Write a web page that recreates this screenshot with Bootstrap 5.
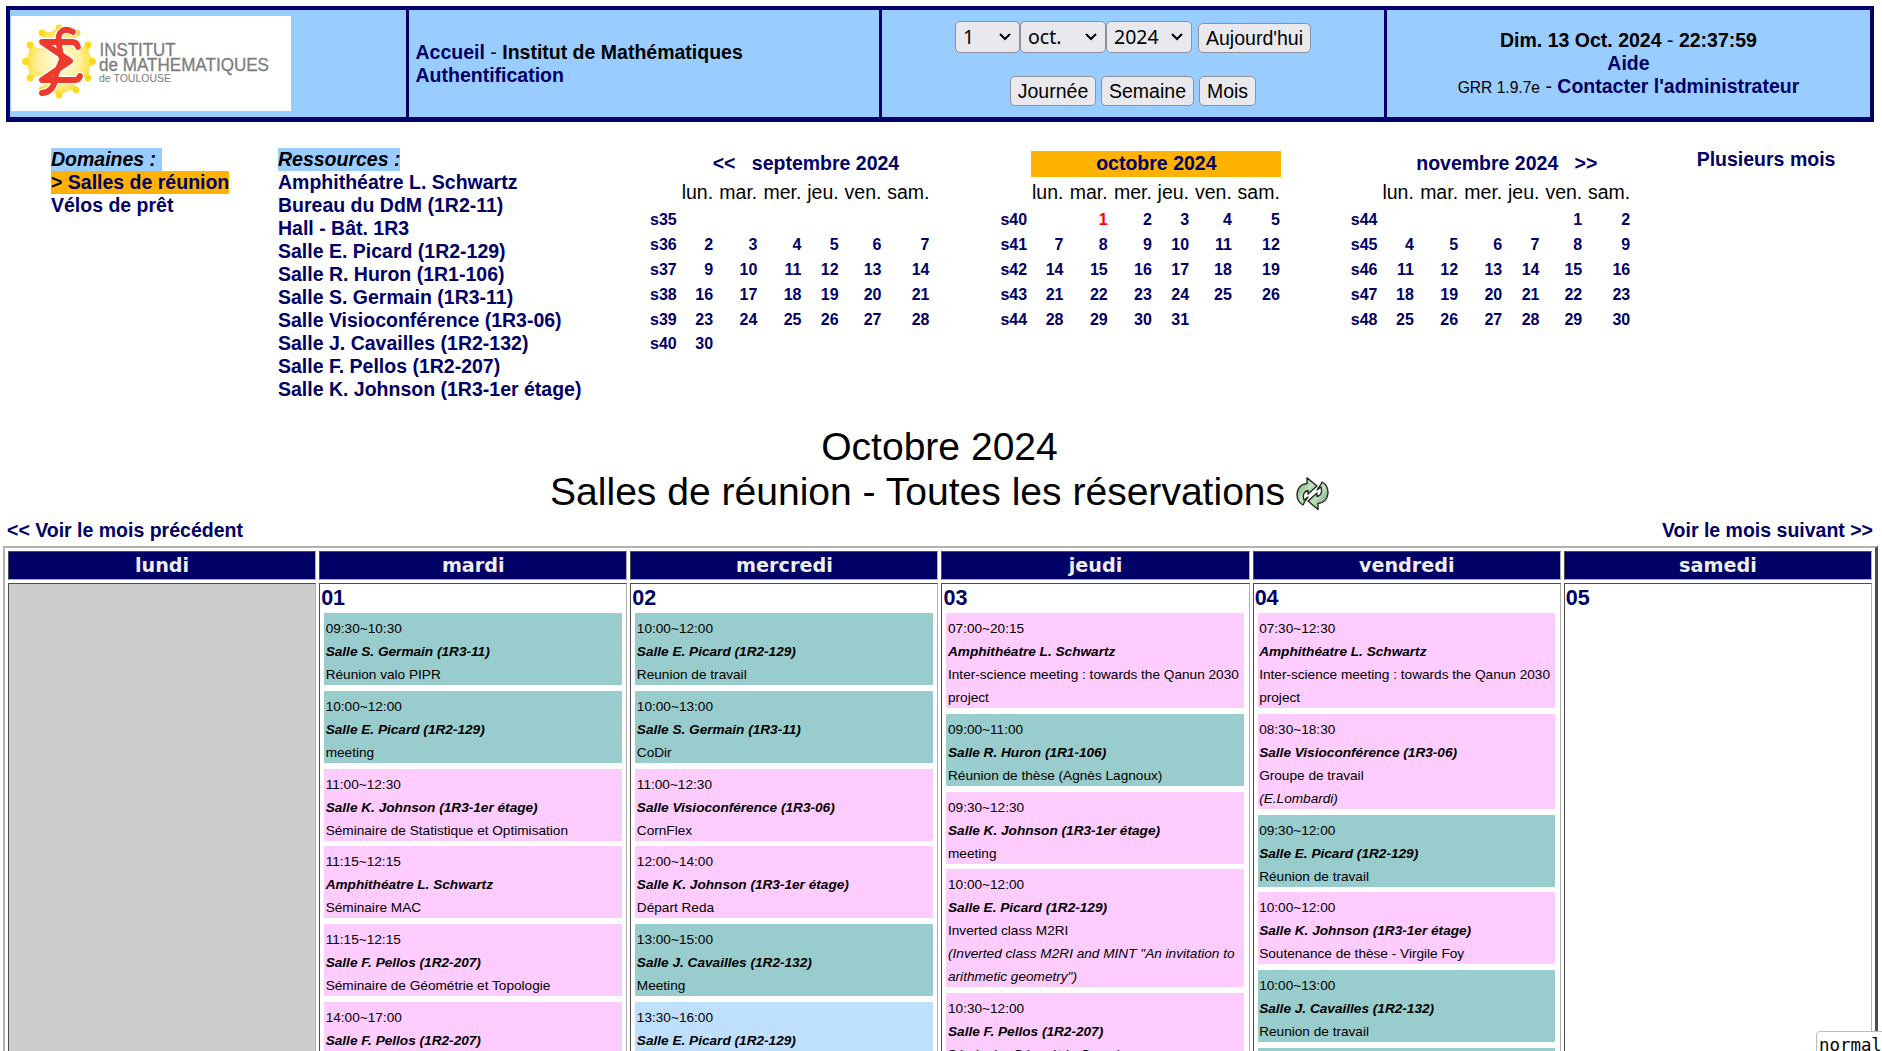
<!DOCTYPE html>
<html lang="fr">
<head>
<meta charset="utf-8">
<title>GRR - Institut de Mathématiques</title>
<link href="https://cdn.jsdelivr.net/npm/bootstrap@5.3.0/dist/css/bootstrap.min.css" rel="stylesheet">
<style>
html,body{height:1051px;overflow:hidden}
body{font-family:"Liberation Sans",Arial,sans-serif;font-size:19.5px;line-height:23px;color:#000;background:#fff;padding:6px 6px 0 3px}
a,.minical.minical a{color:#006;font-weight:700;text-decoration:none}
.banner{margin:0 2px 0 3px;height:116px;background:#9cf;border:4px solid #006;border-bottom-width:5px}
.banner>div+div{border-left:3px solid #006}
.bn-logo{width:396px;padding:6px 0 0 1px}
.bn-site{width:473px;padding-left:6.5px}
.bn-date{width:505px;padding-top:11px}
.logo{display:block;background:#fff}
.ctl{height:32px;padding:0 7px;border:1px solid #8f8f9d;border-radius:5px;background-color:#e9e9ed;color:#000;font:19.5px/28px "Noto Sans",sans-serif}
select.ctl{appearance:none;background-image:url("data:image/svg+xml,%3Csvg xmlns='http://www.w3.org/2000/svg' viewBox='0 0 12 8'%3E%3Cpath d='M1 1l5 5 5-5' fill='none' stroke='%23000' stroke-width='2'/%3E%3C/svg%3E");background-repeat:no-repeat;background-position:right 8px center;background-size:12px 8px}
button.ctl{height:30px;padding:0;font-family:"Liberation Sans",sans-serif;line-height:27px}
.row2{margin-top:23px;gap:5px}
.w64{width:65px}.w86{width:86px}.w113{width:113px;margin-left:2px}.w93{width:93px}.w57{width:57px}
.grr{font-size:15.6px}
.top-area{height:283px;padding-top:25.5px;padding-left:48px}
.dom{width:227px}.res{width:372px}
.hl{background:#9cf}.hl-on{background:#ffb200}
.minical{width:281px;margin-right:69.4px;margin-top:3.5px;display:grid;grid-template-columns:31px 33.6px 44.2px 44.2px 37.2px 42.8px 48px;text-align:right;grid-template-rows:26px 30px repeat(4,25px) 24.5px 24.5px;align-items:center}
.minical .ttl{grid-column:2/-1;text-align:center;height:26px;line-height:24px}
.minical span,.minical a{padding-right:1.5px;white-space:nowrap}
.minical>a{font-size:16px}
.minical .wk{text-align:left}
.minical .ttl a{padding:0}
.minical.minical a.today{color:red}
.plus{margin-left:-4.5px}
.titre{font-size:39.05px;line-height:45px;margin:19px 0 0;font-weight:400;padding-left:0}
.nav-mois{height:30px;padding:3px 3px 0 4px;margin-top:2px}
.planning{border:2px solid;border-color:#b0b0b0 #4d4d4d #4d4d4d #b0b0b0;border-width:2px 3px 2px 2px;padding:3px;display:grid;grid-template-columns:repeat(6,1fr);gap:3px;grid-template-rows:29px 900px;height:940px;margin-right:-2px}
.planning>div{border:1px solid;border-color:#4d4d4d #b0b0b0 #b0b0b0 #4d4d4d;min-width:0}
.jour{background:#006;color:#eee;font:bold 19.2px/28px "DejaVu Sans",sans-serif;text-align:center}
.vide{background:#ccc}
.num{display:block;font-size:21.5px;line-height:28px;height:29px;padding-left:1px}
.resa{display:flow-root;margin:0 4.5px 5.8px 4px;padding:4px 1px 0 1.5px;font-size:13.63px;line-height:23px}
.resa>*{display:block}
.resa>:last-child{margin-bottom:-1px}
.resa b{font-style:italic}
.ta{background:#9cc}.tb{background:#fcf}.tc{background:#bfdfff}
.mode{right:-3px;top:1031px;width:69px;height:26px;border:1px solid #bbb;border-radius:4px 0 0 0;background:#fff;font:17.4px/26px "DejaVu Sans Mono",monospace;padding-left:2px}
</style>
<script src="https://cdn.jsdelivr.net/npm/bootstrap@5.3.0/dist/js/bootstrap.bundle.min.js"></script>
</head>
<body class="position-relative">
<header class="banner d-flex">
  <div class="bn-logo">
    <svg class="logo" width="280" height="95" viewBox="11 16 280 95">
      <defs><radialGradient id="g"><stop offset="0" stop-color="#fffbe6"/><stop offset=".6" stop-color="#fff0a0"/><stop offset="1" stop-color="#ffdf2a"/></radialGradient></defs>
      <path d="M42 31Q50 36 59 27Q68 36 77 31Q75 42 70 48Q80 52 89 43Q86 54 94 61Q86 69 89 80Q80 72 70 76Q74 82 77 91Q68 87 59 96Q50 87 42 91Q46 82 48 76Q38 72 29 80Q32 69 24 61Q32 54 29 43Q38 52 48 48Q44 42 42 31Z" fill="url(#g)" stroke="#ffe25a"/>
      <g fill="#ffd91f"><circle cx="42" cy="33" r="3.400"/><circle cx="59" cy="28" r="3.400"/><circle cx="77" cy="33" r="3.400"/><circle cx="30" cy="45" r="3.400"/><circle cx="88" cy="45" r="3.400"/><circle cx="25.500" cy="61.500" r="3.400"/><circle cx="92.500" cy="61.500" r="3.400"/><circle cx="30" cy="78" r="3.400"/><circle cx="88" cy="78" r="3.400"/><circle cx="42" cy="90" r="3.400"/><circle cx="59" cy="95" r="3.400"/><circle cx="76" cy="90" r="3.400"/></g>
      <g fill="none" stroke-linecap="round" stroke-linejoin="round"><g stroke="#fff" stroke-width="8.500"><path d="M78 47Q77 42 72 42H42L70 61L42 80H75Q79 80 80 76"/><path d="M73 32Q65 27 60 33Q57 38 60 50L62 60L56 74Q55 92 42 93"/></g>
      <g stroke="#ee3a2c" stroke-width="5.800"><path d="M78 47Q77 42 72 42H42L70 61L42 80H75Q79 80 80 76"/><path d="M73 32Q65 27 60 33Q57 38 60 50L62 60L56 74Q55 92 42 93"/></g></g>
      <g fill="#7d7d7d" stroke="#7d7d7d" stroke-width=".3" font-family="Liberation Sans, sans-serif"><text x="99.500" y="55.500" font-size="18" textLength="76" lengthAdjust="spacingAndGlyphs">INSTITUT</text><text x="99" y="70.500" font-size="17.500" textLength="170" lengthAdjust="spacingAndGlyphs">de MATHEMATIQUES</text><text x="99" y="81.500" font-size="11" stroke="none" textLength="72" lengthAdjust="spacingAndGlyphs">de TOULOUSE</text></g>
    </svg>
  </div>
  <div class="bn-site d-flex flex-column justify-content-center"><div><a href="#">Accueil</a> - <b>Institut de Mathématiques</b></div><a href="#">Authentification</a></div>
  <div class="bn-date">
    <div class="d-flex justify-content-center align-items-end">
      <select class="ctl w64"><option>1</option></select><select class="ctl w86"><option>oct.</option></select><select class="ctl w86 me-1"><option>2024</option></select>
      <button class="ctl w113">Aujourd'hui</button>
    </div>
    <div class="row2 d-flex justify-content-center">
      <button class="ctl w86">Journée</button><button class="ctl w93">Semaine</button><button class="ctl w57">Mois</button>
    </div>
  </div>
  <div class="flex-fill text-center d-flex flex-column justify-content-center">
    <div><b>Dim. 13 Oct. 2024</b> - <b>22:37:59</b></div>
    <a href="#">Aide</a>
    <div><span class="grr">GRR 1.9.7e</span> - <a href="#">Contacter l'administrateur</a></div>
  </div>
</header>
<section class="top-area d-flex align-items-start">
  <div class="dom d-flex flex-column align-items-start"><b class="hl"><i>Domaines :&nbsp;</i></b><b class="hl-on">&gt; <a href="#">Salles de réunion</a></b><a href="#">Vélos de prêt</a></div>
  <div class="res d-flex flex-column align-items-start"><b class="hl"><i>Ressources :</i></b><a href="#">Amphithéatre L. Schwartz</a><a href="#">Bureau du DdM (1R2-11)</a><a href="#">Hall - Bât. 1R3</a><a href="#">Salle E. Picard (1R2-129)</a><a href="#">Salle R. Huron (1R1-106)</a><a href="#">Salle S. Germain (1R3-11)</a><a href="#">Salle Visioconférence (1R3-06)</a><a href="#">Salle J. Cavailles (1R2-132)</a><a href="#">Salle F. Pellos (1R2-207)</a><a href="#">Salle K. Johnson (1R3-1er étage)</a></div>
  <div class="minical">
    <i></i><div class="ttl"><a href="#">&lt;&lt;</a>&nbsp;&nbsp; <a href="#">septembre 2024</a></div>
    <i></i><span>lun.</span><span>mar.</span><span>mer.</span><span>jeu.</span><span>ven.</span><span>sam.</span>
    <a class="wk">s35</a><i></i><i></i><i></i><i></i><i></i><i></i>
    <a class="wk">s36</a><a>2</a><a>3</a><a>4</a><a>5</a><a>6</a><a>7</a>
    <a class="wk">s37</a><a>9</a><a>10</a><a>11</a><a>12</a><a>13</a><a>14</a>
    <a class="wk">s38</a><a>16</a><a>17</a><a>18</a><a>19</a><a>20</a><a>21</a>
    <a class="wk">s39</a><a>23</a><a>24</a><a>25</a><a>26</a><a>27</a><a>28</a>
    <a class="wk">s40</a><a>30</a>
  </div>
  <div class="minical">
    <i></i><div class="ttl hl-on"><a href="#">octobre 2024</a></div>
    <i></i><span>lun.</span><span>mar.</span><span>mer.</span><span>jeu.</span><span>ven.</span><span>sam.</span>
    <a class="wk">s40</a><i></i><a class="today">1</a><a>2</a><a>3</a><a>4</a><a>5</a>
    <a class="wk">s41</a><a>7</a><a>8</a><a>9</a><a>10</a><a>11</a><a>12</a>
    <a class="wk">s42</a><a>14</a><a>15</a><a>16</a><a>17</a><a>18</a><a>19</a>
    <a class="wk">s43</a><a>21</a><a>22</a><a>23</a><a>24</a><a>25</a><a>26</a>
    <a class="wk">s44</a><a>28</a><a>29</a><a>30</a><a>31</a>
  </div>
  <div class="minical">
    <i></i><div class="ttl"><a href="#">novembre 2024</a>&nbsp;&nbsp; <a href="#">&gt;&gt;</a></div>
    <i></i><span>lun.</span><span>mar.</span><span>mer.</span><span>jeu.</span><span>ven.</span><span>sam.</span>
    <a class="wk">s44</a><i></i><i></i><i></i><i></i><a>1</a><a>2</a>
    <a class="wk">s45</a><a>4</a><a>5</a><a>6</a><a>7</a><a>8</a><a>9</a>
    <a class="wk">s46</a><a>11</a><a>12</a><a>13</a><a>14</a><a>15</a><a>16</a>
    <a class="wk">s47</a><a>18</a><a>19</a><a>20</a><a>21</a><a>22</a><a>23</a>
    <a class="wk">s48</a><a>25</a><a>26</a><a>27</a><a>28</a><a>29</a><a>30</a>
  </div>
  <a href="#" class="plus text-nowrap">Plusieurs mois</a>
</section>
<h1 class="titre text-center">Octobre 2024<br>Salles de réunion - Toutes les réservations
<svg width="33" height="34" viewBox="0 0 33 34" style="vertical-align:-6px">
  <defs><linearGradient id="v" x2="1" y2="1"><stop offset="0" stop-color="#5f9a62"/><stop offset=".5" stop-color="#c4e2c0"/><stop offset="1" stop-color="#4e8550"/></linearGradient></defs>
  <g fill="url(#v)" stroke="#1c231c" stroke-width="1.300" stroke-linejoin="round"><path d="M7 28C-2 24 -1 7 11 6.500V.8L21 9L12 17V13.500C8 14 6.500 18 8 23L12 20L8 26Z"/><path d="M26 5C35 9 34 26 22 26.500V32.500L12 24L21 16V19.500C25 19 26.500 15 25 10L21 13L25 7Z"/></g>
</svg></h1>
<div class="nav-mois d-flex justify-content-between"><a href="#">&lt;&lt; Voir le mois précédent</a><a href="#">Voir le mois suivant &gt;&gt;</a></div>
<main class="planning">
  <div class="jour">lundi</div><div class="jour">mardi</div><div class="jour">mercredi</div><div class="jour">jeudi</div><div class="jour">vendredi</div><div class="jour">samedi</div>
  <div class="vide"></div>
  <div><a class="num">01</a>
    <div class="resa ta"><span>09:30~10:30</span><b>Salle S. Germain (1R3-11)</b><span>Réunion valo PIPR</span></div>
    <div class="resa ta"><span>10:00~12:00</span><b>Salle E. Picard (1R2-129)</b><span>meeting</span></div>
    <div class="resa tb"><span>11:00~12:30</span><b>Salle K. Johnson (1R3-1er étage)</b><span>Séminaire de Statistique et Optimisation</span></div>
    <div class="resa tb"><span>11:15~12:15</span><b>Amphithéatre L. Schwartz</b><span>Séminaire MAC</span></div>
    <div class="resa tb"><span>11:15~12:15</span><b>Salle F. Pellos (1R2-207)</b><span>Séminaire de Géométrie et Topologie</span></div>
    <div class="resa tb"><span>14:00~17:00</span><b>Salle F. Pellos (1R2-207)</b><span>&nbsp;</span></div>
  </div>
  <div><a class="num">02</a>
    <div class="resa ta"><span>10:00~12:00</span><b>Salle E. Picard (1R2-129)</b><span>Reunion de travail</span></div>
    <div class="resa ta"><span>10:00~13:00</span><b>Salle S. Germain (1R3-11)</b><span>CoDir</span></div>
    <div class="resa tb"><span>11:00~12:30</span><b>Salle Visioconférence (1R3-06)</b><span>CornFlex</span></div>
    <div class="resa tb"><span>12:00~14:00</span><b>Salle K. Johnson (1R3-1er étage)</b><span>Départ Reda</span></div>
    <div class="resa ta"><span>13:00~15:00</span><b>Salle J. Cavailles (1R2-132)</b><span>Meeting</span></div>
    <div class="resa tc"><span>13:30~16:00</span><b>Salle E. Picard (1R2-129)</b><span>&nbsp;</span></div>
  </div>
  <div><a class="num">03</a>
    <div class="resa tb"><span>07:00~20:15</span><b>Amphithéatre L. Schwartz</b><span>Inter-science meeting : towards the Qanun 2030 project</span></div>
    <div class="resa ta"><span>09:00~11:00</span><b>Salle R. Huron (1R1-106)</b><span>Réunion de thèse (Agnès Lagnoux)</span></div>
    <div class="resa tb"><span>09:30~12:30</span><b>Salle K. Johnson (1R3-1er étage)</b><span>meeting</span></div>
    <div class="resa tb"><span>10:00~12:00</span><b>Salle E. Picard (1R2-129)</b><span>Inverted class M2RI</span><i>(Inverted class M2RI and MINT "An invitation to arithmetic geometry")</i></div>
    <div class="resa tb"><span>10:30~12:00</span><b>Salle F. Pellos (1R2-207)</b><span>Séminaire Géométrie Complexe</span></div>
  </div>
  <div><a class="num">04</a>
    <div class="resa tb"><span>07:30~12:30</span><b>Amphithéatre L. Schwartz</b><span>Inter-science meeting : towards the Qanun 2030 project</span></div>
    <div class="resa tb"><span>08:30~18:30</span><b>Salle Visioconférence (1R3-06)</b><span>Groupe de travail</span><i>(E.Lombardi)</i></div>
    <div class="resa ta"><span>09:30~12:00</span><b>Salle E. Picard (1R2-129)</b><span>Réunion de travail</span></div>
    <div class="resa tb"><span>10:00~12:00</span><b>Salle K. Johnson (1R3-1er étage)</b><span>Soutenance de thèse - Virgile Foy</span></div>
    <div class="resa ta"><span>10:00~13:00</span><b>Salle J. Cavailles (1R2-132)</b><span>Reunion de travail</span></div>
    <div class="resa ta"><span>&nbsp;</span></div>
  </div>
  <div><a class="num">05</a></div>
</main>
<div class="mode position-absolute">normal</div>
</body>
</html>
